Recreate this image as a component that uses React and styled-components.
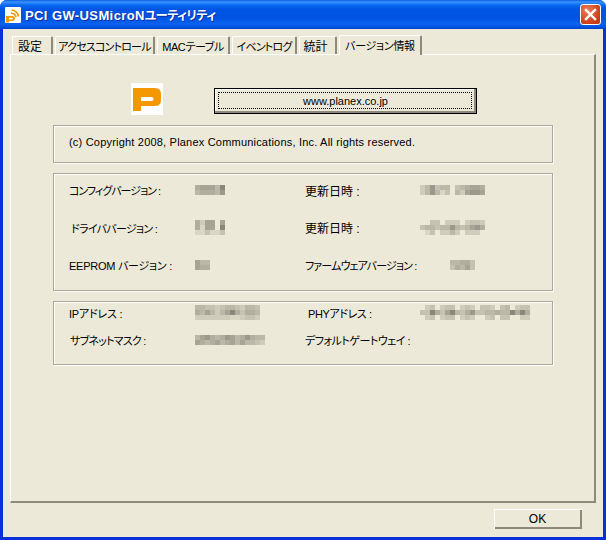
import React from 'react'
import styled, { createGlobalStyle } from 'styled-components'

const UI_FONT = `"Liberation Sans", "Noto Sans CJK JP", sans-serif`

const GlobalStyle = createGlobalStyle`
    html, body {
        margin: 0;
        padding: 0;
        background: #fff;
    }
    body {
        font-family: ${UI_FONT};
        font-size: 12px;
        color: #000;
        font-feature-settings: "palt";
    }
`;

const Win = styled.div`
    width: 606px;
    height: 540px;
    display: flex;
    flex-direction: column;
    border-radius: 7px 7px 0 0;
    overflow: hidden;
    background: #0831d9;
`;

const TitleBar = styled.div`
    height: 29px;
    flex: none;
    display: flex;
    align-items: center;
    padding: 0 5px;
    gap: 4px;
    background: linear-gradient(180deg, #0a5fe0 0, #3a93ff 2px, #0a6af2 5px, #0055e5 9px, #0054e3 18px, #0a62f0 24px, #0054df 27px, #0040c8 29px);
`;

const TitleText = styled.span`
    font-size: 13px;
    font-weight: 700;
    color: #fff;
    letter-spacing: 0.4px;
    white-space: nowrap;
    text-shadow: 1px 1px 0 #0f2f9e;
`;

const TitleKana = styled.span`
    font-size: 12px;
    letter-spacing: -0.4px;
`;

const CloseButton = styled.div`
    width: 21px;
    height: 21px;
    margin-left: auto;
    margin-right: 0;
    display: flex;
    align-items: center;
    justify-content: center;
    box-sizing: border-box;
    border: 1px solid #fff;
    border-radius: 3px;
    background: radial-gradient(circle at 35% 30%, #e8835f, #d2451f 60%, #b8340f);
`;

const Client = styled.div`
    flex: 1;
    margin: 0 3px 3px;
    background: #ece9d8;
    display: flex;
    flex-direction: column;
    padding: 6px 7px 0;
`;

const TabRow = styled.div`
    height: 19px;
    display: flex;
    align-items: flex-end;
    padding-left: 2px;
    gap: 2px;
    position: relative;
    z-index: 1;
`;

const Tab = styled.div`
    box-sizing: border-box;
    width: ${p => p.$w}px;
    height: ${p => (p.$active ? 20 : 18)}px;
    display: flex;
    align-items: center;
    justify-content: center;
    white-space: nowrap;
    font-size: ${p => p.$size || 12}px;
    letter-spacing: ${p => p.$ls || 0}px;
    padding-bottom: ${p => (p.$active ? 2 : 0)}px;
    padding-right: ${p => p.$pr || 0}px;
    border-top: 1px solid #fff;
    border-left: 1px solid #fff;
    border-right: 2px solid #8d8a7c;
    border-radius: 2px 2px 0 0;
    background: #ece9d8;
    margin-bottom: ${p => (p.$active ? -1 : 0)}px;
`;

const Panel = styled.div`
    box-sizing: border-box;
    height: 449px;
    border-top: 1px solid #fff;
    border-left: 1px solid #fff;
    border-right: 2px solid #8d8a7c;
    border-bottom: 2px solid #8d8a7c;
    padding: 28px 0 0 42px;
`;

const TopRow = styled.div`
    display: flex;
    align-items: flex-start;
    height: 42px;
    padding-left: 78px;
`;

const Logo = styled.div`
    width: 32px;
    height: 32px;
    background: #fff;
    flex: none;
    margin-right: 51px;
`;

const SiteButton = styled.button`
    box-sizing: border-box;
    width: 263px;
    height: 26px;
    margin-top: 5px;
    padding: 0;
    font-family: ${UI_FONT};
    font-size: 11px;
    color: #000;
    background: #ece9d8;
    border: 1px solid #000;
    box-shadow: inset -2px -2px 0 #8d8a7c, inset 1px 1px 0 #fff;
    position: relative;
    &::after {
        content: '';
        position: absolute;
        inset: 3px 4px 4px 3px;
        border: 1px dotted #000;
    }
`;

const Group = styled.div`
    box-sizing: border-box;
    width: 500px;
    height: ${p => p.$h}px;
    margin-bottom: 10px;
    border: 1px solid #aca899;
    box-shadow: 1px 1px 0 #fff, inset 1px 1px 0 #fff;
    padding: ${p => p.$pad};
`;

const Copyright = styled.div`
    font-size: 11px;
    letter-spacing: 0.2px;
    line-height: 14px;
`;

const InfoRow = styled.div`
    display: flex;
    align-items: center;
    height: ${p => p.$h}px;
    margin-bottom: ${p => p.$gap || 0}px;
`;

const Label = styled.span`
    width: ${p => p.$w}px;
    flex: none;
    margin-left: ${p => p.$ml || 0}px;
    padding-left: ${p => p.$pl || 0}px;
    box-sizing: border-box;
    white-space: nowrap;
    font-size: ${p => p.$size || 11}px;
    letter-spacing: ${p => p.$ls || 0}px;
`;

const Mosaic = styled.div`
    display: grid;
    grid-template-columns: repeat(${p => p.$cols}, 5px);
    grid-auto-rows: 5px;
    flex: none;
    width: ${p => p.$cols * 5}px;
`;

const Cell = styled.div`
    background: ${p => p.$c};
`;

const OkWrap = styled.div`
    display: flex;
    justify-content: flex-end;
    padding: 6px 14px 0 0;
`;

const OkButton = styled.button`
    box-sizing: border-box;
    width: 88px;
    height: 20px;
    padding: 0 1px 0 0;
    font-family: ${UI_FONT};
    font-size: 12px;
    color: #000;
    background: #ece9d8;
    border: 0;
    box-shadow: inset 1px 1px 0 #fff, inset -2px -2px 0 #8d8a7c;
`;

const shades = ['#ece9d8', '#e3e0cf', '#d9d6c6', '#cfccbc', '#c5c2b2', '#bbb8a9', '#b1ae9f', '#a7a496', '#9c998c', '#8a877b']

function Blur({ rows }) {
    return (
        <Mosaic $cols={rows[0].length}>
            {rows.join('').split('').map((s, i) => <Cell key={i} $c={shades[Number(s)]} />)}
        </Mosaic>
    )
}

function AppIcon() {
    return (
        <svg width="16" height="16" viewBox="0 0 16 16">
            <rect width="16" height="16" rx="1" fill="#fff" />
            <path d="M1 9h6.500a2.500 2.500 0 0 1 0 5H4v1.500H1z M4 10.800v1.600h3a.8.8 0 0 0 0-1.600z" fill="#f39800" fillRule="evenodd" />
            <path d="M6 6.200a5 5 0 0 1 5 4M6.500 3a8 8 0 0 1 7 6.500" fill="none" stroke="#f39800" strokeWidth="1.600" />
        </svg>
    )
}

function PlanexLogo() {
    return (
        <svg width="32" height="32" viewBox="0 0 32 32">
            <path d="M2 5h22q6 0 6 6v6q0 6-6 6h-14v5H2z M10 14v4h11q1.500 0 1.500-2t-1.500-2z" fill="#f39800" fillRule="evenodd" />
        </svg>
    )
}

export default function App() {
    return (
        <Win>
            <GlobalStyle />
            <TitleBar>
                <AppIcon />
                <TitleText>PCI GW-USMicroN<TitleKana>ユーティリティ</TitleKana></TitleText>
                <CloseButton>
                    <svg width="13" height="13" viewBox="0 0 13 13">
                        <path d="M2 2l9 9M11 2l-9 9" stroke="#fff" strokeWidth="2.400" strokeLinecap="square" />
                    </svg>
                </CloseButton>
            </TitleBar>
            <Client>
                <TabRow>
                    <Tab $w={41} $pr={4}>設定</Tab>
                    <Tab $w={100} $size={11} $ls={-0.8}>アクセスコントロール</Tab>
                    <Tab $w={73} $size={11} $ls={-0.4}>MACテーブル</Tab>
                    <Tab $w={65} $size={11} $ls={-0.8}>イベントログ</Tab>
                    <Tab $w={38} $pr={4}>統計</Tab>
                    <Tab $w={83} $size={11} $ls={-0.3} $active>バージョン情報</Tab>
                </TabRow>
                <Panel>
                    <TopRow>
                        <Logo><PlanexLogo /></Logo>
                        <SiteButton>www.planex.co.jp</SiteButton>
                    </TopRow>
                    <Group $h={38} $pad="9px 15px">
                        <Copyright>(c) Copyright 2008, Planex Communications, Inc. All rights reserved.</Copyright>
                    </Group>
                    <Group $h={118} $pad="6px 15px 0">
                        <InfoRow $h={20} $gap={17}>
                            <Label $w={126} $ls={-1}>コンフィグバージョン :</Label>
                            <Blur rows={['677759', '566658']} />
                            <Label $w={115} $ml={80} $size={12}>更新日時 :</Label>
                            <Blur rows={['3584550456776', '3585240537887']} />
                        </InfoRow>
                        <InfoRow $h={21} $gap={17}>
                            <Label $w={126} $pl={2} $ls={-0.7}>ドライババージョン :</Label>
                            <Blur rows={['637707', '627709', '224224']} />
                            <Label $w={115} $ml={80} $size={12}>更新日時 :</Label>
                            <Blur rows={['0044033303443', '4554558545786', '0240335303330']} />
                        </InfoRow>
                        <InfoRow $h={20}>
                            <Label $w={126} $ls={-0.25}>EEPROM バージョン :</Label>
                            <Blur rows={['755', '766']} />
                            <Label $w={145} $ml={95} $ls={-0.85}>ファームウェアバージョン :</Label>
                            <Blur rows={['55664', '46574']} />
                        </InfoRow>
                    </Group>
                    <Group $h={64} $pad="1px 15px 0">
                        <InfoRow $h={19} $gap={8}>
                            <Label $w={126} $ls={-0.2}>IPアドレス :</Label>
                            <Blur rows={['5544345543554', '6575357964665', '3333333223443']} />
                            <Label $w={112} $ml={48} $ls={-0.4}>PHYアドレス :</Label>
                            <Blur rows={['0340344034304430450344', '4496479546844556559696', '0340344034300340440033']} />
                        </InfoRow>
                        <InfoRow $h={20}>
                            <Label $w={126} $pl={1} $ls={-0.8}>サブネットマスク :</Label>
                            <Blur rows={['57865687568655', '76567567575543']} />
                            <Label $w={120} $ml={40} $ls={-0.5}>デフォルトゲートウェイ :</Label>
                        </InfoRow>
                    </Group>
                </Panel>
                <OkWrap>
                    <OkButton>OK</OkButton>
                </OkWrap>
            </Client>
        </Win>
    )
}
